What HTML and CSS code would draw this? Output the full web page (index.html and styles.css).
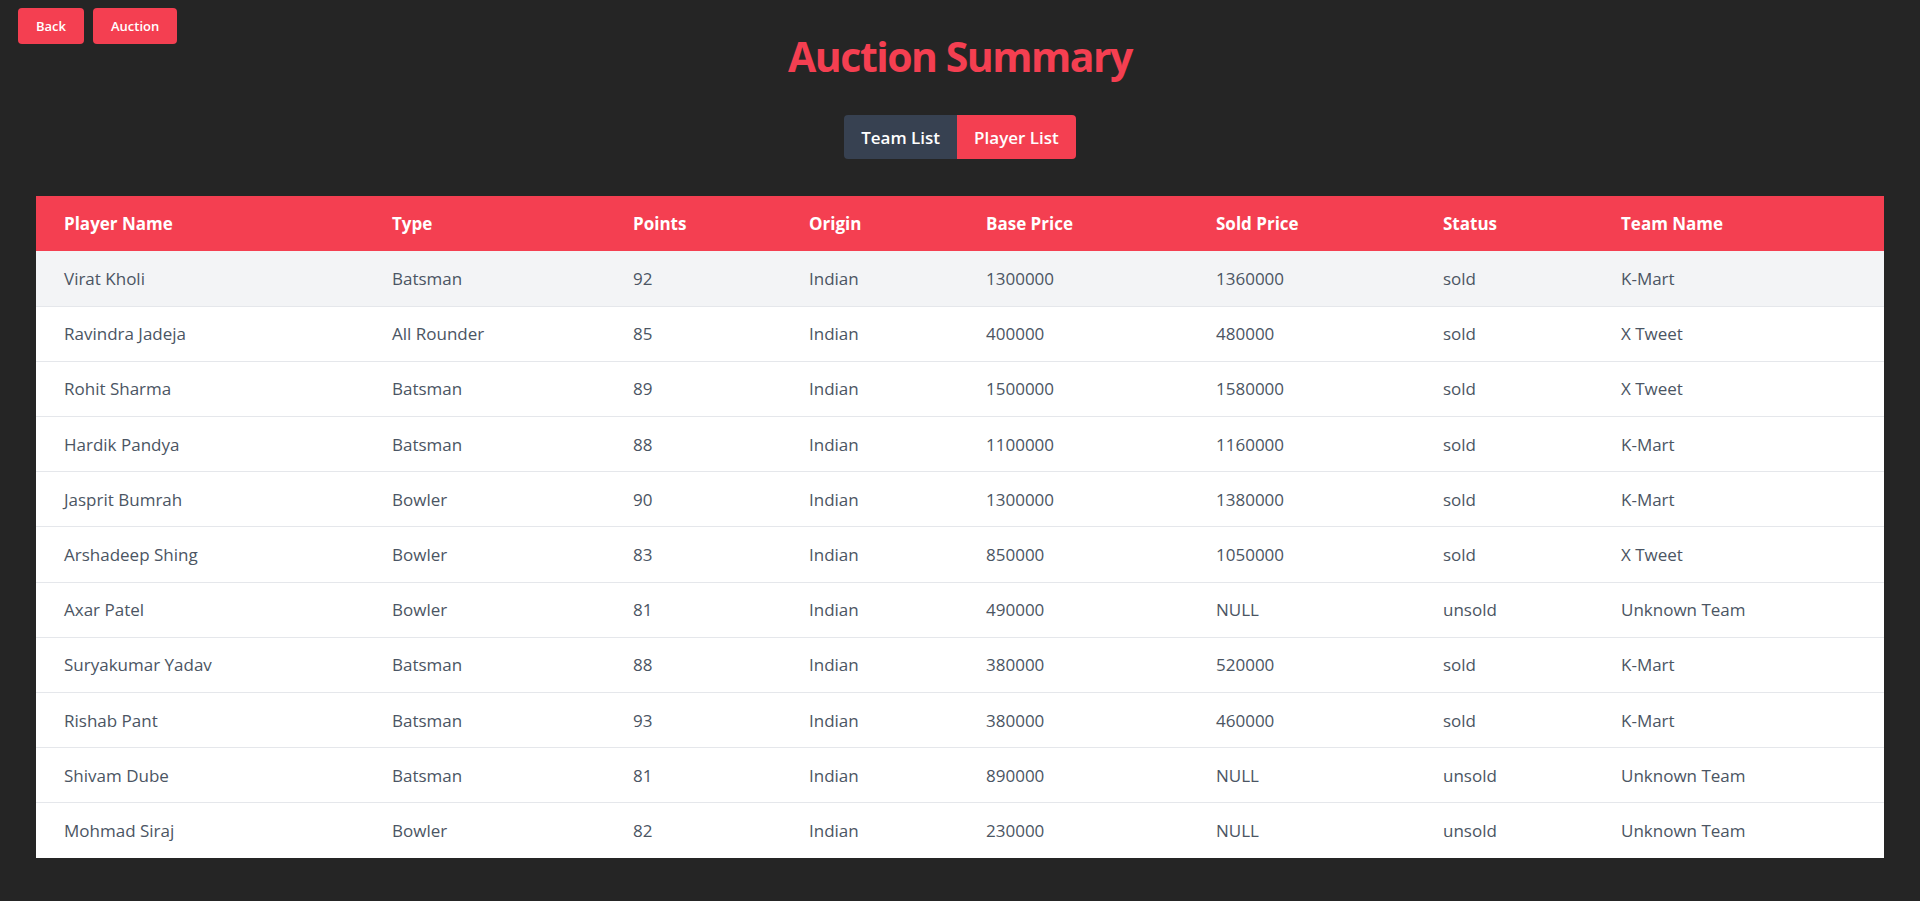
FILE: index.html
```html
<!DOCTYPE html>
<html lang="en">
<head>
<meta charset="utf-8">
<title>Auction Summary</title>
<link rel="stylesheet" href="styles.css">
</head>
<body>
<div class="page">
  <header class="top">
    <div class="nav">
      <button class="nav-btn">Back</button>
      <button class="nav-btn">Auction</button>
    </div>
    <h1 class="title">Auction Summary</h1>
    <div></div>
  </header>
  <div class="tabs">
    <button class="tab tab-dark">Team List</button>
    <button class="tab tab-active">Player List</button>
  </div>
  <div class="table-wrap">
    <table class="players">
      <colgroup>
        <col class="c1"><col class="c2"><col class="c3"><col class="c4">
        <col class="c5"><col class="c6"><col class="c7"><col class="c8">
      </colgroup>
      <thead>
        <tr>
          <th>Player Name</th><th>Type</th><th>Points</th><th>Origin</th>
          <th>Base Price</th><th>Sold Price</th><th>Status</th><th>Team Name</th>
        </tr>
      </thead>
      <tbody>
        <tr class="hl"><td>Virat Kholi</td><td>Batsman</td><td>92</td><td>Indian</td><td>1300000</td><td>1360000</td><td>sold</td><td>K-Mart</td></tr>
        <tr><td>Ravindra Jadeja</td><td>All Rounder</td><td>85</td><td>Indian</td><td>400000</td><td>480000</td><td>sold</td><td>X Tweet</td></tr>
        <tr><td>Rohit Sharma</td><td>Batsman</td><td>89</td><td>Indian</td><td>1500000</td><td>1580000</td><td>sold</td><td>X Tweet</td></tr>
        <tr><td>Hardik Pandya</td><td>Batsman</td><td>88</td><td>Indian</td><td>1100000</td><td>1160000</td><td>sold</td><td>K-Mart</td></tr>
        <tr><td>Jasprit Bumrah</td><td>Bowler</td><td>90</td><td>Indian</td><td>1300000</td><td>1380000</td><td>sold</td><td>K-Mart</td></tr>
        <tr><td>Arshadeep Shing</td><td>Bowler</td><td>83</td><td>Indian</td><td>850000</td><td>1050000</td><td>sold</td><td>X Tweet</td></tr>
        <tr><td>Axar Patel</td><td>Bowler</td><td>81</td><td>Indian</td><td>490000</td><td>NULL</td><td>unsold</td><td>Unknown Team</td></tr>
        <tr><td>Suryakumar Yadav</td><td>Batsman</td><td>88</td><td>Indian</td><td>380000</td><td>520000</td><td>sold</td><td>K-Mart</td></tr>
        <tr><td>Rishab Pant</td><td>Batsman</td><td>93</td><td>Indian</td><td>380000</td><td>460000</td><td>sold</td><td>K-Mart</td></tr>
        <tr><td>Shivam Dube</td><td>Batsman</td><td>81</td><td>Indian</td><td>890000</td><td>NULL</td><td>unsold</td><td>Unknown Team</td></tr>
        <tr><td>Mohmad Siraj</td><td>Bowler</td><td>82</td><td>Indian</td><td>230000</td><td>NULL</td><td>unsold</td><td>Unknown Team</td></tr>
      </tbody>
    </table>
  </div>
</div>
</body>
</html>
```

FILE: styles.css
```css
* { box-sizing: border-box; }
html, body {
  margin: 0;
  padding: 0;
  background: #252525;
}
body {
  font-family: "Open Sans", "Noto Sans", sans-serif;
  color: #4b5563;
  min-height: 901px;
}
.page {
  display: flex;
  flex-direction: column;
}
.top {
  display: grid;
  grid-template-columns: 1fr auto 1fr;
  align-items: start;
}
.nav {
  display: flex;
  gap: 9px;
  padding: 8px 0 0 18px;
}
.nav-btn {
  height: 36px;
  padding: 0 18px;
  border: none;
  border-radius: 4px;
  background: #f43f51;
  color: #fff;
  font-family: inherit;
  font-size: 13px;
  font-weight: 600;
  cursor: pointer;
}
.title {
  margin: 0;
  padding-top: 31px;
  font-size: 41px;
  line-height: 50px;
  font-weight: 700;
  letter-spacing: -1.5px;
  color: #f43f51;
  text-align: center;
}
.tabs {
  display: flex;
  justify-content: center;
  margin-top: 34px;
}
.tab {
  height: 44px;
  padding: 0 17px;
  border: none;
  color: #fff;
  font-family: inherit;
  font-size: 17px;
  font-weight: 600;
  cursor: pointer;
}
.tab-dark {
  background: #374151;
  border-radius: 4px 0 0 4px;
}
.tab-active {
  background: #f43f51;
  border-radius: 0 4px 4px 0;
}
.table-wrap {
  margin: 37px 36px 0;
}
.players {
  width: 100%;
  border-collapse: collapse;
  table-layout: fixed;
  background: #fff;
}
.c1 { width: 328px; }
.c2 { width: 241px; }
.c3 { width: 176px; }
.c4 { width: 177px; }
.c5 { width: 230px; }
.c6 { width: 227px; }
.c7 { width: 178px; }
.c8 { width: auto; }
.players th {
  background: #f43f51;
  color: #fff;
  text-align: left;
  font-size: 17px;
  font-weight: 700;
  height: 55px;
  padding: 0 0 0 28px;
}
.players td {
  height: 55.2px;
  padding: 0 0 0 28px;
  font-size: 17px;
  color: #4b5563;
  border-bottom: 1px solid #e5e7eb;
}
.players tr.hl td {
  background: #f3f4f6;
}
.players tbody tr:last-child td {
  border-bottom: none;
}
```
